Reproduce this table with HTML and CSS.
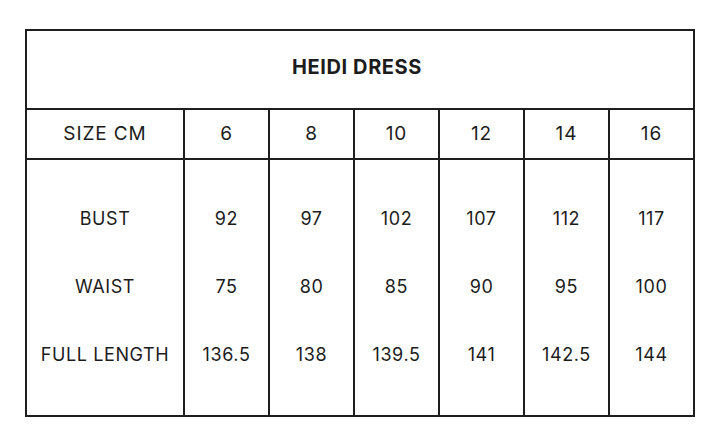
FILE: index.html
```html
<!DOCTYPE html>
<html>
<head>
<meta charset="utf-8">
<link rel="stylesheet" href="styles.css">
</head>
<body>
<div class="chart">
  <div class="title">HEIDI DRESS</div>
  <div class="row head">
    <div class="cell label">SIZE CM</div>
    <div class="cell">6</div>
    <div class="cell">8</div>
    <div class="cell">10</div>
    <div class="cell">12</div>
    <div class="cell">14</div>
    <div class="cell">16</div>
  </div>
  <div class="row body">
    <div class="col label"><span>BUST</span><span>WAIST</span><span>FULL LENGTH</span></div>
    <div class="col"><span>92</span><span>75</span><span>136.5</span></div>
    <div class="col"><span>97</span><span>80</span><span>138</span></div>
    <div class="col"><span>102</span><span>85</span><span>139.5</span></div>
    <div class="col"><span>107</span><span>90</span><span>141</span></div>
    <div class="col"><span>112</span><span>95</span><span>142.5</span></div>
    <div class="col"><span>117</span><span>100</span><span>144</span></div>
  </div>
</div>
</body>
</html>
```
FILE: styles.css
```css
html, body {
  margin: 0;
  background: #ffffff;
}
body {
  padding: 29px 0 0 25px;
  font-family: Inter, "Liberation Sans", sans-serif;
  color: #1c1c1c;
}
.chart {
  width: 666px;
  border: 2px solid #1e1e1e;
}
.title {
  height: 79px;
  box-sizing: border-box;
  padding: 0 6px 6px 0;
  display: flex;
  align-items: center;
  justify-content: center;
  font-weight: 700;
  font-size: 20px;
  letter-spacing: 0.6px;
  border-bottom: 2px solid #1e1e1e;
}
.row {
  display: grid;
  grid-template-columns: 156px repeat(6, 85px);
}
.head {
  height: 48px;
  border-bottom: 2px solid #1e1e1e;
}
.cell {
  display: flex;
  align-items: center;
  justify-content: center;
  padding-bottom: 2px;
  font-size: 19px;
  letter-spacing: 0.9px;
}
.cell + .cell, .col + .col {
  border-left: 2px solid #1e1e1e;
}
.body {
  height: 255px;
}
.col {
  display: flex;
  flex-direction: column;
  align-items: center;
  padding-top: 24px;
  font-size: 18px;
  letter-spacing: 0.6px;
}
.col span {
  height: 68px;
  display: flex;
  align-items: center;
}
```
